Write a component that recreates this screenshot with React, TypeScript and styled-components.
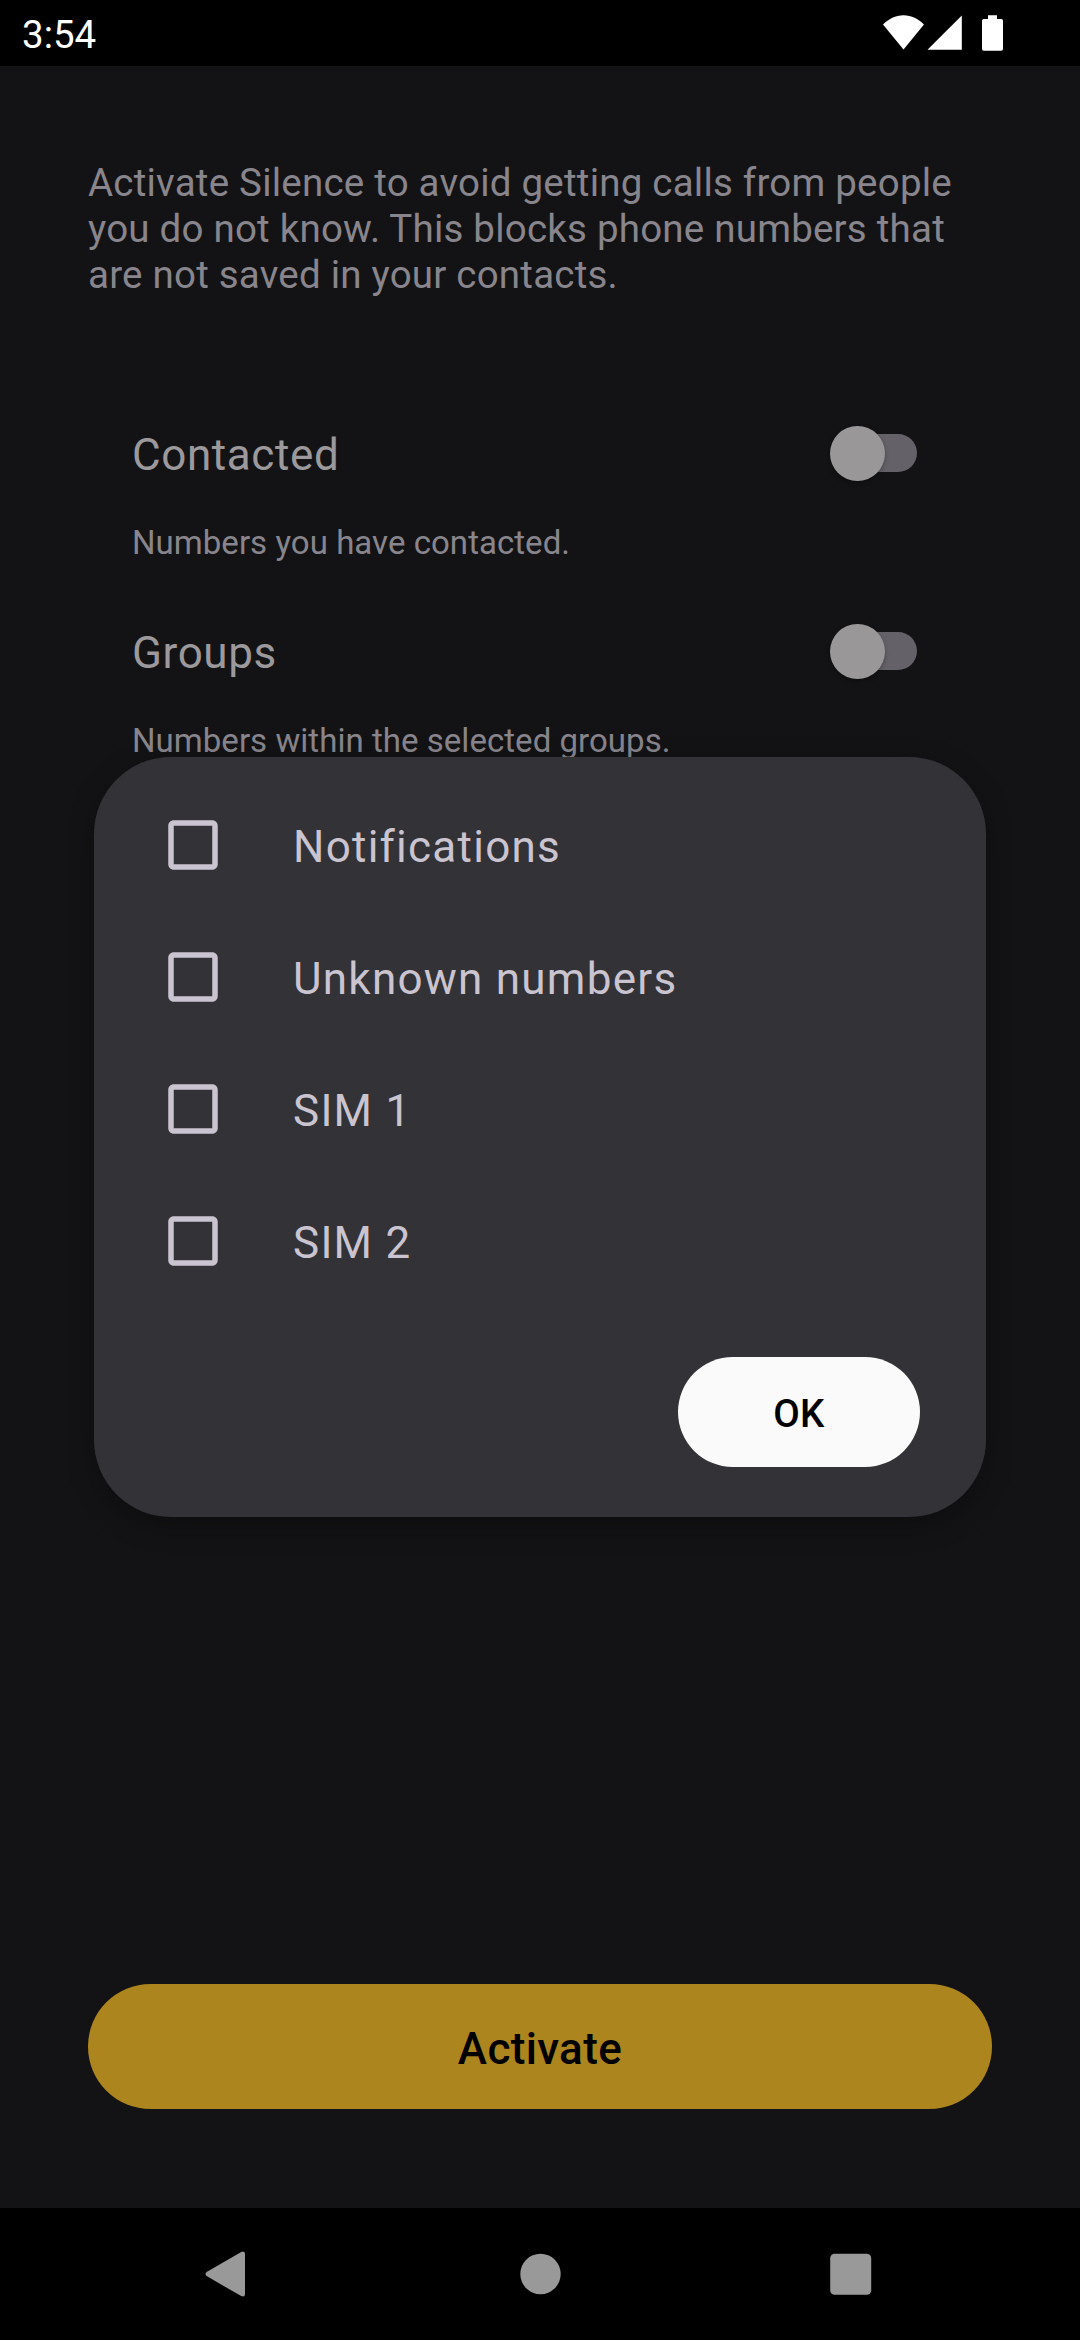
import React from "react";
import styled, { createGlobalStyle } from "styled-components";

const GlobalStyle = createGlobalStyle`
  * { box-sizing: border-box; }
  html, body { margin: 0; padding: 0; background: #000; }
  body { font-family: Roboto, "Noto Sans", sans-serif; }
  button { font-family: inherit; border: 0; padding: 0; }
`;

const Screen = styled.div`
  position: relative;
  display: flex;
  flex-direction: column;
  width: 1080px;
  height: 2340px;
  overflow: hidden;
  background: #131315;
`;

const StatusBar = styled.header`
  display: flex;
  align-items: center;
  justify-content: space-between;
  flex: none;
  height: 66px;
  padding: 0 77px 0 22px;
  background: #000;
  color: #fff;
`;

const Clock = styled.time`
  font-size: 38.5px;
  line-height: 46px;
  margin-top: 3px;
`;

const StatusIcons = styled.svg`
  display: block;
  width: 120px;
  height: 66px;
`;

const Content = styled.main`
  display: flex;
  flex-direction: column;
  flex: 1;
  padding: 94px 88px 99px;
`;

const Intro = styled.p`
  margin: 0;
  color: #88858c;
  font-size: 38.5px;
  line-height: 46px;
  letter-spacing: 0.22px;
  white-space: pre-line;
`;

const Options = styled.section`
  display: flex;
  flex-direction: column;
  margin-top: 89px;
  padding: 0 44px;
`;

const Option = styled.div`
  height: 198px;
`;

const OptionHeader = styled.div`
  display: flex;
  align-items: center;
  justify-content: space-between;
  height: 132px;
  padding-right: 31px;
`;

const OptionTitle = styled.span`
  margin-top: 4px;
  color: #9b999b;
  font-size: 44px;
  line-height: 52px;
  letter-spacing: 0.6px;
`;

const OptionText = styled.p`
  margin: 4px 0 0;
  color: #88858c;
  font-size: 33px;
  line-height: 39px;
  letter-spacing: 0.04px;
`;

const Track = styled.div`
  display: flex;
  align-items: center;
  width: 82px;
  height: 38px;
  border-radius: 19px;
  background: #656169;
`;

const Thumb = styled.div`
  flex: none;
  width: 55px;
  height: 55px;
  margin-left: -5.5px;
  border-radius: 50%;
  background: #999798;
  box-shadow: 0 2px 4px rgba(0, 0, 0, 0.3);
`;

const ActivateButton = styled.button`
  height: 125px;
  margin-top: auto;
  padding-top: 4px;
  border-radius: 62.5px;
  background: #ac851f;
  color: #000;
  font-size: 44px;
  font-weight: 500;
  line-height: 52px;
  letter-spacing: 0.35px;
`;

const Dialog = styled.div`
  position: absolute;
  top: 757px;
  left: 94px;
  display: flex;
  flex-direction: column;
  width: 892px;
  height: 760px;
  padding: 22px 66px 50px;
  border-radius: 77px;
  background: #333236;
  box-shadow: 0 8px 28px rgba(0, 0, 0, 0.3);
`;

const CheckRow = styled.label`
  display: flex;
  align-items: center;
  gap: 67px;
  height: 132px;
  color: #cac4d0;
  font-size: 44px;
  line-height: 52px;
  letter-spacing: 1.25px;
`;

const BoxIcon = styled.svg`
  flex: none;
  display: block;
  width: 66px;
  height: 66px;
  fill: currentColor;
`;

const RowText = styled.span`
  margin-top: 4px;
`;

const OkButton = styled.button`
  align-self: flex-end;
  width: 242px;
  height: 110px;
  margin-top: auto;
  padding-top: 3px;
  border-radius: 55px;
  background: #fafafa;
  color: #000;
  font-size: 38.5px;
  font-weight: 500;
  line-height: 46px;
  letter-spacing: 0.00714em;
`;

const NavBar = styled.nav`
  display: flex;
  align-items: center;
  justify-content: space-between;
  flex: none;
  height: 132px;
  padding: 0 204px 0 201px;
  background: #000;
`;

const NavIcon = styled.svg`
  display: block;
  width: 50px;
  height: 50px;
  fill: #999;
`;

const options = [
  { title: "Contacted", text: "Numbers you have contacted." },
  { title: "Groups", text: "Numbers within the selected groups." },
];

const checks = ["Notifications", "Unknown numbers", "SIM 1", "SIM 2"];

export default function App() {
  return (
    <>
      <GlobalStyle />
      <Screen>
        <StatusBar>
          <Clock>3:54</Clock>
          <StatusIcons viewBox="883 0 120 66" fill="#fff">
            <path d="M903.5 49.5 883 24.6C888.5 19 895.5 15.3 903.5 15.3S918.5 19 924 24.6Z" />
            <path d="M927.5 49.7 961.8 15.4V49.7Z" />
            <path d="M988 15.2H997V19H1001.2Q1003 19 1003 20.8V49Q1003 50.8 1001.2 50.8H983.8Q982 50.8 982 49V20.8Q982 19 983.8 19H988Z" />
          </StatusIcons>
        </StatusBar>
        <Content>
          <Intro>
            {"Activate Silence to avoid getting calls from people\nyou do not know. This blocks phone numbers that\nare not saved in your contacts."}
          </Intro>
          <Options>
            {options.map((o) => (
              <Option key={o.title}>
                <OptionHeader>
                  <OptionTitle>{o.title}</OptionTitle>
                  <Track>
                    <Thumb />
                  </Track>
                </OptionHeader>
                <OptionText>{o.text}</OptionText>
              </Option>
            ))}
          </Options>
          <ActivateButton>Activate</ActivateButton>
        </Content>
        <NavBar>
          <NavIcon viewBox="0 0 50 50">
            <path d="M5.6 22.9 40.2 2.9Q44 1.400 44 5V45Q44 48.600 40.200 47.100L5.600 27.100Q3.400 25 5.600 22.900Z" />
          </NavIcon>
          <NavIcon viewBox="0 0 50 50">
            <circle cx="26.500" cy="25" r="20.200" />
          </NavIcon>
          <NavIcon viewBox="0 0 50 50">
            <rect x="4.200" y="4.800" width="41" height="41" rx="4.500" />
          </NavIcon>
        </NavBar>
        <Dialog role="dialog">
          {checks.map((c) => (
            <CheckRow key={c}>
              <BoxIcon viewBox="0 0 24 24">
                <path d="M19 5v14H5V5h14m0-2H5c-1.100 0-2 .9-2 2v14c0 1.100.9 2 2 2h14c1.100 0 2-.9 2-2V5c0-1.100-.9-2-2-2z" />
              </BoxIcon>
              <RowText>{c}</RowText>
            </CheckRow>
          ))}
          <OkButton>OK</OkButton>
        </Dialog>
      </Screen>
    </>
  );
}
